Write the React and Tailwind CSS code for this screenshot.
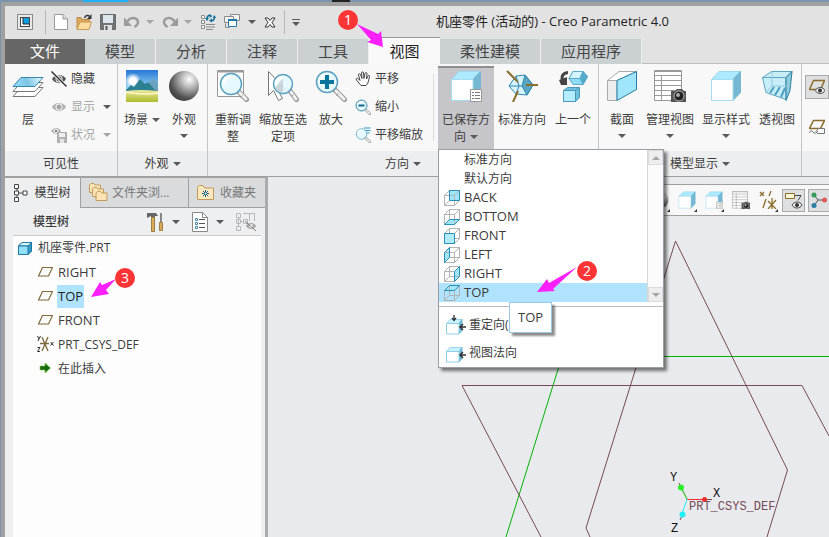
import React from "react";

const Svg = ({ w = 16, h, vb, children, className = "" }) => (
  <svg
    width={w}
    height={h || w}
    viewBox={vb || `0 0 ${w} ${h || w}`}
    fill="none"
    aria-hidden="true"
    className={`shrink-0 ${className}`}
  >
    {children}
  </svg>
);

const Caret = ({ dim, className = "" }) => (
  <Svg w={8} h={4} className={className}>
    <path d="M0 0h8L4 4z" fill={dim ? "#a5a5a5" : "#5a5a5a"} />
  </Svg>
);

/* ---------- Title bar icons ---------- */
const AppIcon = () => (
  <Svg>
    <rect x="0.5" y="0.5" width="15" height="15" fill="#e9e9e9" stroke="#8a8a8a" />
    <rect x="3.5" y="3.5" width="9" height="9" fill="#fff" stroke="#444" />
    <rect x="6" y="4" width="6" height="6" fill="#0a9de0" />
    <path d="M6 4v6h6" stroke="#223" />
  </Svg>
);
const NewIcon = () => (
  <Svg w={14} h={16}>
    <path d="M.5.5h8.5l4.5 4.5v10.5H.5z" fill="#fff" stroke="#9a9a9a" />
    <path d="M9 .5V5h4.5" fill="#ddd" stroke="#9a9a9a" />
  </Svg>
);
const OpenIcon = () => (
  <Svg>
    <path d="M1 15V3.5h4l1 2h7.5V9" fill="#dca95c" stroke="#b98b45" />
    <path d="M1 15.5L4 8h11.5L13 15.5z" fill="#fbdca0" stroke="#c79a55" />
    <path d="M8.5 4c1-3 4-3 5-1.5" stroke="#333" strokeWidth="1.5" />
    <path d="M15.5 0v5H11z" fill="#333" />
  </Svg>
);
const SaveIcon = () => (
  <Svg>
    <path d="M.5.5h15v15H.5z" fill="#747474" stroke="#6a6a6a" />
    <path d="M3 1h10v8H3z" fill="#dde6ea" />
    <path d="M4 11h8v5H4z" fill="#dde1e3" />
    <path d="M5.500 12v4h2v-4z" fill="#555" />
  </Svg>
);
const UndoIcon = ({ flip }) => (
  <Svg w={16} h={12} className={flip ? "-scale-x-100" : ""}>
    <path d="M3 6C5 2 10 .5 13 3.500c2.500 3 0 6-2.500 7.500" stroke="#9b9b9b" strokeWidth="2.500" />
    <path d="M0 1.500V10h8z" fill="#9b9b9b" />
  </Svg>
);
const RegenIcon = () => (
  <Svg>
    <path d="M1.500 1.500h3v3h-3zM1.500 6.500h3v3h-3zM1.500 11.500h3v3h-3z" fill="#fff" stroke="#8a8a8a" />
    <path d="M6 13h9M6 10.500h9M6 15.500h7" stroke="#8a8a8a" />
    <path d="M7 5c0-3 2-4 3-3.500M14.500 3c0 3-2 4-3 3.500" stroke="#14719b" strokeWidth="1.600" />
    <path d="M9.500 0v4l3-2zM12 4.500v4L9 6.500zM5 4h4L7 7zM12.500 4h3.500l-1.500-3z" fill="#14719b" />
  </Svg>
);
const WindowsIcon = () => (
  <Svg>
    <path d="M6.500.5h9v6h-9z" fill="#f4f4f4" stroke="#8a8a8a" />
    <path d="M.5 2.500h9v6h-9z" fill="#f4f4f4" stroke="#8a8a8a" />
    <path d="M1.500 9.500v4h4" stroke="#8a8a8a" />
    <path d="M4.500 5.500h8v7h-8z" fill="#fff" stroke="#1f7ba5" />
    <path d="M4 6h9" stroke="#1f7ba5" strokeWidth="2" />
  </Svg>
);
const CloseIcon = () => (
  <Svg w={12} h={11}>
    <path d="M1 1h3l2 2.500L8 1h3L8 5.500 11 10H8L6 7.500 4 10H1l3-4.500z" fill="#fff" stroke="#333" />
  </Svg>
);

/* ---------- Ribbon icons ---------- */
const LayersIcon = () => (
  <Svg w={32}>
    <path d="M9 17.500h22l-8 9H1z" fill="#fff" stroke="#777" />
    <path d="M9 12.500h22l-8 9H1z" fill="#fff" stroke="#777" />
    <path d="M9 7.500h22l-8 9H1z" fill="url(#layerFill)" stroke="#3488ad" />
    <defs>
      <linearGradient id="layerFill" x1="1" x2="30" y1="18" y2="7" gradientUnits="userSpaceOnUse">
        <stop stopColor="#9fe2fa" />
        <stop offset=".5" stopColor="#7cc6e6" />
        <stop offset="1" stopColor="#effaff" />
      </linearGradient>
    </defs>
  </Svg>
);
const EyeIcon = ({ dim, slash }) => (
  <Svg>
    <path d="M1 8c3-5.500 11-5.500 14 0-3 5.500-11 5.500-14 0z" fill={dim ? "#b0b0b0" : "#555"} />
    <circle cx="8" cy="8" r="3.500" fill="#f7f7f7" />
    <circle cx="8" cy="8" r="2.500" fill={dim ? "#a5a5a5" : "#444"} />
    {slash && <path d="M1 .5l14 15" stroke="#f7f7f7" strokeWidth="3" />}
    {slash && <path d="M.5.5l15 15" stroke="#222" strokeWidth="1.300" />}
  </Svg>
);
const StatusIcon = () => (
  <Svg>
    <path d="M0 4c2.500-4 8-4 10 0-2 4-7.500 4-10 0z" fill="#b5b5b5" />
    <circle cx="5" cy="4" r="1.800" fill="#777" stroke="#fff" />
    <path d="M6.500 5.500h9v10h-9z" fill="#b5b5b5" stroke="#aaa" />
    <path d="M8 6h6v4H8z" fill="#eee" />
    <path d="M9 12h4v4H9z" fill="#e5e5e5" />
  </Svg>
);
const SceneIcon = () => (
  <Svg w={32}>
    <defs>
      <linearGradient id="sky" x1="0" x2="0" y1="0" y2="1">
        <stop stopColor="#2678d5" />
        <stop offset=".7" stopColor="#aee7fc" />
      </linearGradient>
      <linearGradient id="grass" x1="0" x2="0" y1="0" y2="1">
        <stop stopColor="#e9eaa0" />
        <stop offset="1" stopColor="#afbb2c" />
      </linearGradient>
      <radialGradient id="sun">
        <stop offset=".4" stopColor="#fff" />
        <stop offset="1" stopColor="#fff" stopOpacity="0" />
      </radialGradient>
    </defs>
    <path d="M0 0h32v32H0z" fill="url(#sky)" />
    <circle cx="7" cy="11" r="8" fill="url(#sun)" />
    <path d="M16 20L27 8l5 5v8H16z" fill="#6ba3bf" />
    <path d="M0 20l5-5 3 2 6-8 5 5 3-2 7 8 3 1H0z" fill="#2d8091" />
    <path d="M0 21q14-2 32 0v11H0z" fill="url(#grass)" />
    <path d="M0 21q16 4 32 1v2q-16 2-32-1z" fill="#fff5c4" />
  </Svg>
);
const SphereIcon = ({ w = 32 }) => (
  <Svg w={w} vb="0 0 32 32">
    <defs>
      <radialGradient id="sphere" cx=".68" cy=".28" r=".75">
        <stop stopColor="#fff" />
        <stop offset=".4" stopColor="#b0b0b0" />
        <stop offset=".85" stopColor="#505050" />
        <stop offset="1" stopColor="#444" />
      </radialGradient>
    </defs>
    <circle cx="16" cy="16" r="15" fill="url(#sphere)" />
  </Svg>
);
const Lens = ({ cx = 14, cy = 14, r = 10.5 }) => (
  <>
    <path d={`M${cx + r * 0.75} ${cy + r * 0.75}L29.500 29.500`} stroke="#999" strokeWidth="5" strokeLinecap="round" />
    <path d={`M${cx + r * 0.85} ${cy + r * 0.85}L29 29`} stroke="#f1f1f1" strokeWidth="3" strokeLinecap="round" />
    <path d={`M${cx + r + 1} ${cy + r + 1}l-2 2`} stroke="#999" />
    <circle cx={cx} cy={cy} r={r} fill="#e3f8ff" fillOpacity=".9" stroke="#5ba0bc" strokeWidth="1.500" />
    <path d={`M${cx - r + 3} ${cy}a${r - 3} ${r - 3} 0 0 1 ${r - 3} ${3 - r}`} stroke="#fff" strokeWidth="3" />
  </>
);
const RefitIcon = () => (
  <Svg w={32}>
    <path d="M.5.5h26v26H.5z" fill="#fff" stroke="#999" />
    <path d="M.5 1.500h26" stroke="#999" strokeWidth="2" />
    <Lens />
  </Svg>
);
const ZoomSelIcon = () => (
  <Svg w={32}>
    <path d="M1.500 1.500v24l5-5 5 10 4-2-5-9h8z" fill="#fff" stroke="#777" />
    <Lens cx={16} cy={14} r={9.5} />
    <path d="M8 18l8-10v14q-5 1-8-4z" fill="#c3ccd0" fillOpacity=".8" />
  </Svg>
);
const ZoomInIcon = () => (
  <Svg w={32}>
    <Lens cx={12} cy={12} />
    <path d="M12 5v14M5 12h14" stroke="#08759e" strokeWidth="4" />
  </Svg>
);
const HandIcon = () => (
  <Svg>
    <path d="M6 14.500L1.500 9c-1-1.500.5-2.500 2-1L5 9.500 3.500 4c-.3-1.500 1.500-1.800 2-.5L7 7.500 6.500 2c0-1.500 2-1.500 2 0L9 7.500l1-5c.3-1.500 2.200-1 2 .3L11.500 8l1.500-3c.7-1.300 2-.5 1.500.8-1 3-1 7-3.500 8.700z" fill="#fff" stroke="#444" />
  </Svg>
);
const ZoomOutIcon = () => (
  <Svg vb="0 0 32 32">
    <Lens cx={13} cy={13} />
    <circle cx="13" cy="13" r="11" stroke="#5ba0bc" strokeWidth="2" />
    <path d="M7 13h12" stroke="#08648d" strokeWidth="4" />
  </Svg>
);
const PanZoomIcon = () => (
  <Svg vb="0 0 32 32">
    <Lens cx={13} cy={14} />
    <path d="M18 2h13M21 7h10M24 12h5" stroke="#2b98c4" strokeWidth="2" />
  </Svg>
);
const Cube = () => (
  <>
    <path d="M1.500 9.500L9 1.500h21.500L23 9.500z" fill="#aeeaff" stroke="#98d9ef" />
    <path d="M23 9.500l7.500-8v21L23 30.500z" fill="#74b8d3" stroke="#74b8d3" />
    <path d="M1.500 9.500H23v21H1.500z" fill="#fff" stroke="#a5dcf0" />
  </>
);
const CubeIcon = ({ w = 32 }) => (
  <Svg w={w} vb="0 0 32 32">
    <Cube />
  </Svg>
);
const SavedViewIcon = ({ w = 32 }) => (
  <Svg w={w} vb="0 0 32 32">
    <Cube />
    <path d="M20.500 19.500h11v12h-11z" fill="#fff" stroke="#999" />
    <path d="M22 22.500h2m1 0h5M22 25.500h2m1 0h5M22 28.500h2m1 0h5" stroke="#777" />
  </Svg>
);
const StdOrientIcon = () => (
  <Svg w={32}>
    <path d="M10 6l9-1 8 10-6 10-11-1-7-8z" fill="#d8f5ff" stroke="#2b86ab" />
    <path d="M19 5l8 10-6 10-5-9z" fill="#5aa6c4" stroke="#2b86ab" />
    <path d="M3 16h13M10 6l3 10-3 8" stroke="#2b86ab" />
    <path d="M1 1l11 11M20 15h12M12 21L7 32" stroke="#8b6d2c" strokeWidth="2" />
  </Svg>
);
const PrevIcon = () => (
  <Svg w={32}>
    <path d="M16 1.500h10l4.500 5-4.500 8H16l-4-6z" fill="#8edbf6" stroke="#5aa9c8" />
    <path d="M12 8.500l4-7h10l-3 7z" fill="#d4f5ff" stroke="#5aa9c8" />
    <path d="M23 8.500l3 6 4.500-8-4.500-5z" fill="#55abcc" stroke="#5aa9c8" />
    <path d="M6.500 20.500l4-3h12v10l-4 4h-12z" fill="#6fc0de" stroke="#4898b8" />
    <path d="M6.500 20.500h12v11h-12z" fill="#b5ecff" stroke="#4898b8" />
    <path d="M18.500 20.500l4-3" stroke="#4898b8" />
    <path d="M11 2.500C5 3 4 7 6 12" stroke="#444" strokeWidth="3" />
    <path d="M2 10l8-3v8H4z" fill="#444" />
  </Svg>
);
const SectionIcon = () => (
  <Svg w={32}>
    <path d="M1.500 10.500L13 1.500h17.500L11 10.500z" fill="#fff" stroke="#aaa" />
    <path d="M1.500 10.500H11v20H1.500z" fill="#ededed" stroke="#aaa" />
    <path d="M11 10.500l19.500-9v18L11 30.500z" fill="#9fe5fb" stroke="#287e9f" />
  </Svg>
);
const Camera = () => (
  <>
    <path d="M17 21h4l2-2h5l2 2h2v11H17z" fill="#555" />
    <circle cx="25" cy="26" r="5" fill="#222" stroke="#bbb" />
    <circle cx="24" cy="25" r="2" fill="#aaa" />
  </>
);
const ManageIcon = ({ w = 32 }) => (
  <Svg w={w} vb="0 0 32 32">
    <path d="M.5.5h27v30H.5z" fill="#fff" stroke="#999" />
    <path d="M0 1.500h28M0 5.500h28M0 10.500h28M0 15.500h28M0 20.500h28M0 25.500h28M7.500 5v25" stroke="#999" />
    <Camera />
  </Svg>
);
const PerspIcon = () => (
  <Svg w={32}>
    <path d="M1.500 7.500l9-6h20.500l-6 6v22l-20-7z" fill="#c6edf8" stroke="#5aa5c0" />
    <path d="M25 7.500l6-6-2 19-4 10z" fill="#8fcbde" stroke="#287e9f" />
    <path d="M1.500 7.500H25" stroke="#5aa5c0" />
    <path d="M11 2v14l-6 6.500M11 16h18" stroke="#95c9da" />
    <path d="M13 17L9 23M19 17l-5 8M24 18l-4 9" stroke="#4b9fc0" strokeWidth="2" />
  </Svg>
);
const PlaneEye = () => (
  <Svg>
    <path d="M4.500 1.500h11l-4 9h-11z" stroke="#8b6d2c" strokeWidth="1.500" />
    <path d="M6 11.500c3-4 8-4 10 0-2 4-7 4-10 0z" fill="#eee" stroke="#444" />
    <circle cx="11" cy="11.500" r="2" fill="#333" />
  </Svg>
);
const PlaneTag = () => (
  <Svg>
    <path d="M4.500 1.500h11l-4 8h-11z" stroke="#8b6d2c" strokeWidth="1.500" />
    <path d="M9.500 9.500h6v5h-7l-1.500-2z" fill="#fff" stroke="#777" />
    <path d="M0 14q2-4 4-1t5-1" stroke="#777" />
  </Svg>
);

/* ---------- Model tree icons ---------- */
const TreeIcon = () => (
  <Svg w={14} h={18}>
    <path d="M3 5v8M3 9h6" stroke="#444" />
    <path d="M.5.5h4v4h-4zM.5 13.500h4v4h-4zM.5 7h4v4h-4zM9 7h4v4H9z" fill="#fff" stroke="#444" />
  </Svg>
);
const Folder = ({ x = 0, y = 0 }) => (
  <g transform={`translate(${x} ${y})`}>
    <path d="M.5 9.500V2L2 .5h3L6 2h5.500v7.500z" fill="#fbe3b5" stroke="#c39c5c" />
  </g>
);
const FoldersIcon = () => (
  <Svg w={19}>
    <Folder />
    <Folder x={3} y={4} />
    <Folder x={6.5} y={8} />
  </Svg>
);
const FavIcon = () => (
  <Svg w={17} h={15}>
    <path d="M.5 14.500V2L2 .5h4L7.500 3h9v11.500z" fill="#fbe7c0" stroke="#c39c5c" />
    <path d="M8.500 5v7M5 8.500h7M6 6l5 5M11 6l-5 5" stroke="#1a5f80" />
    <circle cx="8.500" cy="8.500" r="1" fill="#fff" />
  </Svg>
);
const ToolsIcon = () => (
  <Svg w={17} h={20}>
    <path d="M0 1h9l2 3H8v2H4V4L0 6z" fill="#666" />
    <path d="M4.500 5.500h3v14h-3z" fill="#d9a95c" stroke="#a08040" />
    <path d="M14 1v9" stroke="#888" strokeWidth="2" />
    <path d="M12.500 10.500h3v8h-3z" fill="#d9a95c" stroke="#a08040" />
  </Svg>
);
const ListIcon = () => (
  <Svg w={16} h={20}>
    <path d="M.5.5h10l5 5v14H.5z" fill="#fff" stroke="#8a8a8a" />
    <path d="M10.500.5v5h5" stroke="#8a8a8a" />
    <path d="M7 7.500h6M7 11.500h6M7 15.500h6" stroke="#555" />
    <path d="M3.500 6.500h2v2h-2zM3.500 10.500h2v2h-2zM3.500 14.500h2v2h-2z" stroke="#4a89a5" />
  </Svg>
);
const TreeHideIcon = () => (
  <Svg w={21} h={20}>
    <path d="M.5 1.500h4v4h-4zM.5 7.500h4v4h-4zM.5 14.500h4v4h-4zM7.500 7.500h4v4h-4zM2.500 5v10M4 9.500h3M7 1.500h12M13.500 1v8M18.500 1v8" stroke="#b8b8b8" />
    <path d="M10 14c2-4 8-4 10 0-2 4-8 4-10 0z" fill="#a5a5a5" />
    <circle cx="15" cy="14" r="2" fill="#eee" />
    <path d="M9 9l11 10" stroke="#777" />
  </Svg>
);
const PartIcon = () => (
  <Svg w={14} h={13}>
    <path d="M.5 4L4 .5h9.500v9L10 12.500H.5z" fill="#2e9bcb" stroke="#23789f" />
    <path d="M.5 4L4 .5h9.500L10 4z" fill="#d5f5ff" stroke="#23789f" />
    <path d="M.5 4H10v8.500H.5z" fill="#93e0fa" stroke="#23789f" />
  </Svg>
);
const PlaneIcon = () => (
  <Svg w={15} h={10}>
    <path d="M4.500.5h10l-4 8.500h-10z" stroke="#7d6a3d" strokeWidth="1.200" />
  </Svg>
);
const CsysIcon = () => (
  <Svg w={17} h={16}>
    <path d="M3 7.500h9M5 1l6 14M11 1L5 15" stroke="#7d6a3d" strokeWidth="1.300" />
    <path d="M.5 0l1.500 3M3.500 0L1 5M13.500 6l3 3.500M16.500 6l-3 3.500M.5 11.500H3l-2.500 4H3" stroke="#333" />
  </Svg>
);
const InsertIcon = () => (
  <Svg w={12}>
    <path d="M1 4h5V1l5.500 5L6 11V8H1z" fill="#1c6b12" stroke="#6fcf2f" strokeWidth=".6" />
  </Svg>
);

/* ---------- View list icons ---------- */
const FACES = {
  BACK: "M5.500.5h10v10h-10z",
  BOTTOM: "M.5 15.500l5-5h10l-5 5z",
  FRONT: "M.5 5.500h10v10H.5z",
  LEFT: "M.5 5.500l5-5v10l-5 5z",
  RIGHT: "M10.500 5.500l5-5v10l-5 5z",
  TOP: "M.5 5.500l5-5h10l-5 5z",
};
const FaceIcon = ({ face }) => (
  <Svg>
    <path d={FACES[face]} fill="#9fe5fb" />
    <path d="M5.500.5h10v10h-10zM.5 5.500h10v10H.5zM.5 5.500l5-5M10.500 5.500l5-5M.5 15.500l5-5M10.500 15.500l5-5" stroke="#b3b3b3" />
    <path d={FACES[face]} fill={face === "FRONT" ? "#b0eafc" : "none"} stroke="#2b8fb8" />
  </Svg>
);
const ReorientIcon = ({ top }) => (
  <Svg w={20}>
    <path d="M.5 8.500L4 4.500h12l-3 4z" fill="#c9f1ff" stroke="#98d9ef" />
    <path d="M13 8.500l3-4v11l-3 3.500z" fill="#6fb9d6" stroke="#74b8d3" />
    <path d="M.5 8.500H13V19H.5z" fill="#fff" stroke="#8fcfe5" />
    <path d="M20 12h-5M17 9l-3 3 3 3" stroke="#333" strokeWidth="1.500" />
    {top && <path d="M8 0v5M6 3l2 2.500L10 3" stroke="#333" strokeWidth="1.300" />}
  </Svg>
);

/* ---------- Graphics toolbar icons ---------- */
const DatumIcon = () => (
  <Svg w={18}>
    <path d="M1 1l4 4M5 1L1 5M12 0l-2 5M7 8L4 17M9 10l8 8M17 9L9 18M13 7v11" stroke="#8b6d2c" strokeWidth="1.300" />
  </Svg>
);
const AnnotIcon = () => (
  <Svg w={18} h={17}>
    <path d="M.5 1.500h9v5h-9z" fill="#fff6d5" stroke="#8b6d2c" />
    <path d="M10 3.500h6l-3 5" stroke="#444" />
    <path d="M7 13c2-4 8-4 10 0-2 4-8 4-10 0z" fill="#eee" stroke="#444" />
    <circle cx="12" cy="13" r="2" fill="#333" />
  </Svg>
);
const SpinIcon = () => (
  <Svg>
    <path d="M3 3l4 5-4 6M7 8h7" stroke="#555" />
    <circle cx="3" cy="3" r="2.500" fill="#3b9a5b" />
    <circle cx="3" cy="13.500" r="2.500" fill="#2d7da5" />
    <circle cx="13.500" cy="8" r="2.500" fill="#e05a5a" />
  </Svg>
);

/* ---------- Ribbon building blocks ---------- */
const BigBtn = ({ icon, lines, caret, width, active }) => (
  <button
    type="button"
    className={`flex shrink-0 flex-col items-center text-xs leading-[17px] ${width} ${
      active ? "mt-[2px] h-[83px] border-t-2 border-[#8f8f8f] bg-[#c5c5ca] pt-[2px]" : "h-[85px] pt-[6px]"
    }`}
  >
    {icon}
    <span className="mt-[9px] flex flex-col items-center whitespace-nowrap">
      {lines.map((line, i) => (
        <span key={line} className="flex items-center gap-1">
          {line}
          {caret === i && <Caret />}
        </span>
      ))}
      {caret === "below" && <Caret className="mt-[6px]" />}
    </span>
  </button>
);

const SmallBtn = ({ icon, label, caret, dim }) => (
  <button
    type="button"
    disabled={dim}
    className={`flex h-7 items-center gap-1 text-xs whitespace-nowrap ${dim ? "text-[#a5a5a5]" : ""}`}
  >
    {icon}
    {label}
    {caret && <Caret dim={caret === "dim"} className="ml-1" />}
  </button>
);

const Group = ({ label, caret, children, className = "" }) => (
  <section aria-label={label} className={`flex shrink-0 flex-col border-r border-[#c3c4c6] ${className}`}>
    <div className="flex h-[87px]">{children}</div>
    <div className="flex h-[25px] items-center justify-center gap-1 bg-[#edeef0] text-xs">
      {label}
      {caret && <Caret />}
    </div>
  </section>
);

const RIBBON_TABS = [
  ["文件", "w-20"],
  ["模型", "w-[71px]"],
  ["分析", "w-[71px]"],
  ["注释", "w-[71px]"],
  ["工具", "w-[71px]"],
  ["视图", "w-[71px]"],
  ["柔性建模", "w-[101px]"],
  ["应用程序", "w-[101px]"],
];

const tabStyle = (name) => {
  if (name === "文件") return "h-[25px] bg-[#666666] text-white";
  if (name === "视图") return "h-[27px] bg-[#f9f9f9] border-t border-[#999] text-[#222]";
  return "h-[25px] bg-[#cbd0d3] border-r border-[#eceeef] text-[#444]";
};

const VIEWS = ["标准方向", "默认方向", "BACK", "BOTTOM", "FRONT", "LEFT", "RIGHT", "TOP"];

const ViewMenu = () => (
  <div className="absolute top-full left-0 z-20 w-[226px] border border-[#9b9fa3] bg-white text-xs shadow-[3px_3px_3px_rgba(0,0,0,0.5)]">
    <div className="flex border-b border-white">
      <ul className="flex-1">
        {VIEWS.map((view) => (
          <li key={view} className="relative">
            <button
              type="button"
              className={`flex h-[19px] w-full items-center gap-1 pl-[5px] text-left ${
                FACES[view] ? "text-[13px]" : ""
              } ${view === "TOP" ? "bg-[#b0e3ff]" : ""}`}
            >
              {FACES[view] ? <FaceIcon face={view} /> : <span className="w-4" />}
              {view}
            </button>
            {view === "TOP" && (
              <div
                role="tooltip"
                className="absolute top-[19px] left-[70px] z-10 border border-[#9cc9e2] bg-white px-2 py-[5px] text-[13px] leading-[19px] shadow-[3px_3px_2px_rgba(0,0,0,0.45)]"
              >
                TOP
              </div>
            )}
          </li>
        ))}
      </ul>
      <div className="flex w-4 flex-col justify-between border-l border-[#d8d8d8] bg-[#fafafa]">
        <span className="flex h-[15px] items-center justify-center border border-[#d9dadb] bg-[#eeeeee]">
          <Caret dim className="rotate-180" />
        </span>
        <span className="flex h-[15px] items-center justify-center border border-[#d9dadb] bg-[#eeeeee]">
          <Caret dim />
        </span>
      </div>
    </div>
    <div className="mt-[3px] border-t border-[#bdbdbd] pt-1">
      <button type="button" className="flex h-7 items-center gap-[3px] pl-[7px]">
        <ReorientIcon top />
        重定向(
      </button>
      <button type="button" className="flex h-7 items-center gap-[3px] pl-[7px]">
        <ReorientIcon />
        视图法向
      </button>
    </div>
  </div>
);

const TitleBar = () => (
  <header className="flex h-8 items-center pl-3">
    <AppIcon />
    <span className="ml-3 h-6 w-px bg-[#b8b8b8]" />
    <div className="ml-2 flex items-center gap-2">
      <button type="button" aria-label="新建"><NewIcon /></button>
      <button type="button" aria-label="打开"><OpenIcon /></button>
      <button type="button" aria-label="保存"><SaveIcon /></button>
      <button type="button" aria-label="撤消" className="flex items-center gap-1.5"><UndoIcon /><Caret dim /></button>
      <button type="button" aria-label="重做" className="flex items-center gap-1.5"><UndoIcon flip /><Caret dim /></button>
      <button type="button" aria-label="重新生成"><RegenIcon /></button>
      <button type="button" aria-label="窗口" className="flex items-center gap-2"><WindowsIcon /><Caret /></button>
      <button type="button" aria-label="关闭"><CloseIcon /></button>
    </div>
    <span className="ml-2 h-6 w-px bg-[#b8b8b8]" />
    <button type="button" aria-label="自定义" className="ml-[7px] flex flex-col items-center gap-0.5">
      <span className="h-px w-2 bg-[#5a5a5a]" />
      <Caret />
    </button>
    <h1 className="flex-1 pr-6 text-center text-[13px] whitespace-nowrap text-[#222]">
      机座零件 (活动的) - Creo Parametric 4.0
    </h1>
  </header>
);

const Ribbon = () => (
  <div className="flex border-b border-[#a0a0a0] bg-[#f8f8f8]">
    <Group label="可见性" className="w-[113px]">
      <BigBtn icon={<LayersIcon />} lines={["层"]} width="w-[46px]" />
      <div className="flex flex-col pt-px">
        <SmallBtn icon={<EyeIcon slash />} label="隐藏" />
        <SmallBtn icon={<EyeIcon dim />} label="显示" caret="on" dim />
        <SmallBtn icon={<StatusIcon />} label="状况" caret="dim" dim />
      </div>
    </Group>
    <Group label="外观" caret className="w-[90px]">
      <span className="w-0.5" />
      <BigBtn icon={<SceneIcon />} lines={["场景"]} caret={0} width="w-11" />
      <BigBtn icon={<SphereIcon />} lines={["外观"]} caret="below" width="w-10" />
    </Group>
    <Group label="方向" caret className="w-[391px]">
      <BigBtn icon={<RefitIcon />} lines={["重新调", "整"]} width="w-[50px]" />
      <BigBtn icon={<ZoomSelIcon />} lines={["缩放至选", "定项"]} width="w-[50px]" />
      <BigBtn icon={<ZoomInIcon />} lines={["放大"]} width="w-[46px]" />
      <div className="flex w-[79px] flex-col pt-px pl-px">
        <SmallBtn icon={<HandIcon />} label="平移" />
        <SmallBtn icon={<ZoomOutIcon />} label="缩小" />
        <SmallBtn icon={<PanZoomIcon />} label="平移缩放" />
      </div>
      <span className="my-2.5 w-px bg-[#dcdcdc]" />
      <div className="relative ml-1 h-[85px]">
        <BigBtn icon={<SavedViewIcon />} lines={["已保存方", "向"]} caret={1} width="w-14" active />
        <ViewMenu />
      </div>
      <BigBtn icon={<StdOrientIcon />} lines={["标准方向"]} width="w-14" />
      <BigBtn icon={<PrevIcon />} lines={["上一个"]} width="w-[46px]" />
    </Group>
    <Group label="模型显示" caret className="w-[203px]">
      <BigBtn icon={<SectionIcon />} lines={["截面"]} caret="below" width="w-[46px]" />
      <BigBtn icon={<ManageIcon />} lines={["管理视图"]} caret="below" width="w-[50px]" />
      <BigBtn icon={<CubeIcon />} lines={["显示样式"]} caret="below" width="w-[62px]" />
      <BigBtn icon={<PerspIcon />} lines={["透视图"]} width="w-10" />
    </Group>
    <div className="flex flex-1 flex-col overflow-hidden">
      <div className="flex flex-1 flex-col items-start gap-4 pt-[11px] pl-[3px]">
        <button type="button" aria-label="平面显示" className="border border-[#aaa] bg-[#dedfe0] p-[3px]">
          <PlaneEye />
        </button>
        <button type="button" aria-label="平面标记显示" className="p-1">
          <PlaneTag />
        </button>
      </div>
      <div className="h-[25px] bg-[#edeef0]" />
    </div>
  </div>
);

const TREE = [
  ["RIGHT", <PlaneIcon />],
  ["TOP", <PlaneIcon />],
  ["FRONT", <PlaneIcon />],
  ["PRT_CSYS_DEF", <CsysIcon />],
  ["在此插入", <InsertIcon />],
];

const Sidebar = () => (
  <aside className="flex w-[263px] shrink-0 flex-col border-t border-r-[3px] border-t-[#a0a0a0] border-r-[#a9abae] bg-[#edeff1] text-xs">
    <div className="flex h-[30px] bg-[#d9dbdc]">
      <button type="button" className="flex w-[75px] items-center justify-center gap-1.5 bg-[#edeff1]">
        <TreeIcon />
        模型树
      </button>
      <button type="button" className="flex flex-1 items-center gap-1 border-b border-l border-[#a0a0a0] pl-2 text-[#777]">
        <FoldersIcon />
        文件夹浏...
      </button>
      <button type="button" className="flex w-[77px] items-center gap-1.5 border-b border-l border-[#a0a0a0] pl-2 text-[#777]">
        <FavIcon />
        收藏夹
      </button>
    </div>
    <div className="flex h-[27px] items-center pr-2 pl-7">
      <h2 className="flex-1 font-medium">模型树</h2>
      <button type="button" aria-label="设置" className="flex items-center gap-2"><ToolsIcon /><Caret /></button>
      <button type="button" aria-label="显示" className="ml-3 flex items-center gap-2"><ListIcon /><Caret /></button>
      <button type="button" aria-label="隐藏树" className="ml-3"><TreeHideIcon /></button>
    </div>
    <div className="mr-1 ml-2 flex-1 border-t border-[#cccccc] bg-[#fdfdfd]">
      <div className="flex h-6 items-center gap-1.5 pl-[5px]">
        <PartIcon />
        机座零件.PRT
      </div>
      <ul className="pl-6">
        {TREE.map(([name, icon]) => (
          <li key={name} className="flex h-6 items-center gap-1">
            <span className="flex w-4 justify-center">{icon}</span>
            <span
              className={`px-px leading-[23px] ${name === "TOP" ? "bg-[#b0e3ff] text-[#222]" : ""} ${
                name.length < 6 && name !== "在此插入" ? "text-[13px]" : ""
              }`}
            >
              {name}
            </span>
          </li>
        ))}
      </ul>
    </div>
  </aside>
);

const Flyout = ({ children, label }) => (
  <button type="button" aria-label={label} className="relative flex h-6 w-[27px] items-center justify-center pl-1.5">
    {children}
    <Svg w={3} className="absolute right-0 bottom-0">
      <path d="M3 0v3H0z" fill="#333" />
    </Svg>
  </button>
);

const Viewport = () => (
  <main className="relative flex-1 overflow-hidden bg-[#e8eaee]">
    <svg
      width="561"
      height="360"
      viewBox="268 177 561 360"
      fill="none"
      className="absolute top-0 left-0"
      role="img"
      aria-label="基准平面"
    >
      <path d="M829 356.500H562L506 537" stroke="#00b400" />
      <path d="M541 537L462 385.500H802L829 436" stroke="#774a55" />
      <path d="M590 537L586 528L675.500 241L787.500 470L767 537" stroke="#774a55" />
      <path d="M687 499.500h25M679 483l8 16" stroke="#774a55" />
      <path d="M687 499.500h17" stroke="#ff2a2a" />
      <path d="M687 499l-6-11" stroke="#2af02a" />
      <path d="M687 499l-5 15" stroke="#20f0f8" />
      <path d="M682 516l-2 4" stroke="#774a55" />
      <circle cx="704.5" cy="499.5" r="2.5" fill="#ff2a2a" />
      <circle cx="681" cy="487.5" r="3" fill="#2af02a" />
      <circle cx="682.5" cy="514.5" r="3" fill="#20f0f8" />
      <g fontFamily="Liberation Mono, monospace" fontSize="12">
        <text x="670" y="481" fill="#111">Y</text>
        <text x="713" y="497" fill="#111">X</text>
        <text x="671" y="532" fill="#111">Z</text>
        <text x="689" y="510" fill="#774a55">PRT_CSYS_DEF</text>
      </g>
    </svg>
    <div className="relative mt-[7px] ml-auto flex h-8 w-[232px] items-center justify-end border-y border-l border-[#a0a0a0] bg-[#f8f8f8]">
      <Flyout label="渲染"><SphereIcon w={18} /></Flyout>
      <Flyout label="显示样式"><CubeIcon w={18} /></Flyout>
      <Flyout label="已保存方向"><SavedViewIcon w={18} /></Flyout>
      <button type="button" aria-label="视图管理器" className="flex w-[27px] justify-center pl-1.5"><ManageIcon w={18} /></button>
      <Flyout label="基准显示"><DatumIcon /></Flyout>
      <button type="button" aria-label="注释显示" className="ml-1 flex h-[23px] w-[23px] items-center justify-center border border-[#aaa] bg-[#dedfe0]"><AnnotIcon /></button>
      <button type="button" aria-label="旋转中心" className="ml-[3px] flex h-[23px] w-[21px] items-center justify-center border border-r-0 border-[#aaa] bg-[#dedfe0]"><SpinIcon /></button>
    </div>
  </main>
);

const Badge = ({ n, className }) => (
  <span className={`absolute flex h-5 w-5 items-center justify-center rounded-full bg-[#fb3535] text-sm text-white ${className}`}>
    {n}
  </span>
);

export default function App() {
  return (
    <div className="flex min-h-screen flex-col border-l border-[#7c93ad] bg-[#7c93ad] font-['Open_Sans','Noto_Sans_CJK_SC',sans-serif] text-[#3c3c3c]">
      <div className="flex h-0.5 pl-[82px]">
        <span className="w-[45px] bg-[#1fb0f5]" />
        <span className="ml-[204px] w-[18px] bg-[#222]" />
      </div>
      <div className="flex flex-1 flex-col overflow-hidden border-t-4 border-l-4 border-[#a0a0a0] bg-[#e2e2e2]">
        <TitleBar />
        <nav className="flex h-[26px] items-end border-b border-transparent">
          {RIBBON_TABS.map(([name, width]) => (
            <button
              key={name}
              type="button"
              className={`-mb-px shrink-0 text-[15px] leading-[25px] ${width} ${tabStyle(name)}`}
            >
              {name}
            </button>
          ))}
          <span className="-mb-px flex-1 border-b border-[#c0c0c0]" />
        </nav>
        <Ribbon />
        <div className="flex flex-1">
          <Sidebar />
          <Viewport />
        </div>
      </div>

      <div className="pointer-events-none absolute top-0 left-0 z-30">
        <svg width="620" height="310" fill="none" className="absolute top-0 left-0" aria-hidden="true">
          <path d="M357 24L378 34l3-3 2 16-16-5 4-2z" fill="#fb20fb" />
          <path d="M577 267L553 289l2 2-18 1 10-13 2 4z" fill="#fb20fb" />
          <path d="M116 279L106 290l3 4-18 3 9-15 2 3z" fill="#fb20fb" />
        </svg>
        <Badge n="1" className="top-[10px] left-[338px]" />
        <Badge n="2" className="top-[261px] left-[577px]" />
        <Badge n="3" className="top-[268px] left-[115px]" />
      </div>
    </div>
  );
}
